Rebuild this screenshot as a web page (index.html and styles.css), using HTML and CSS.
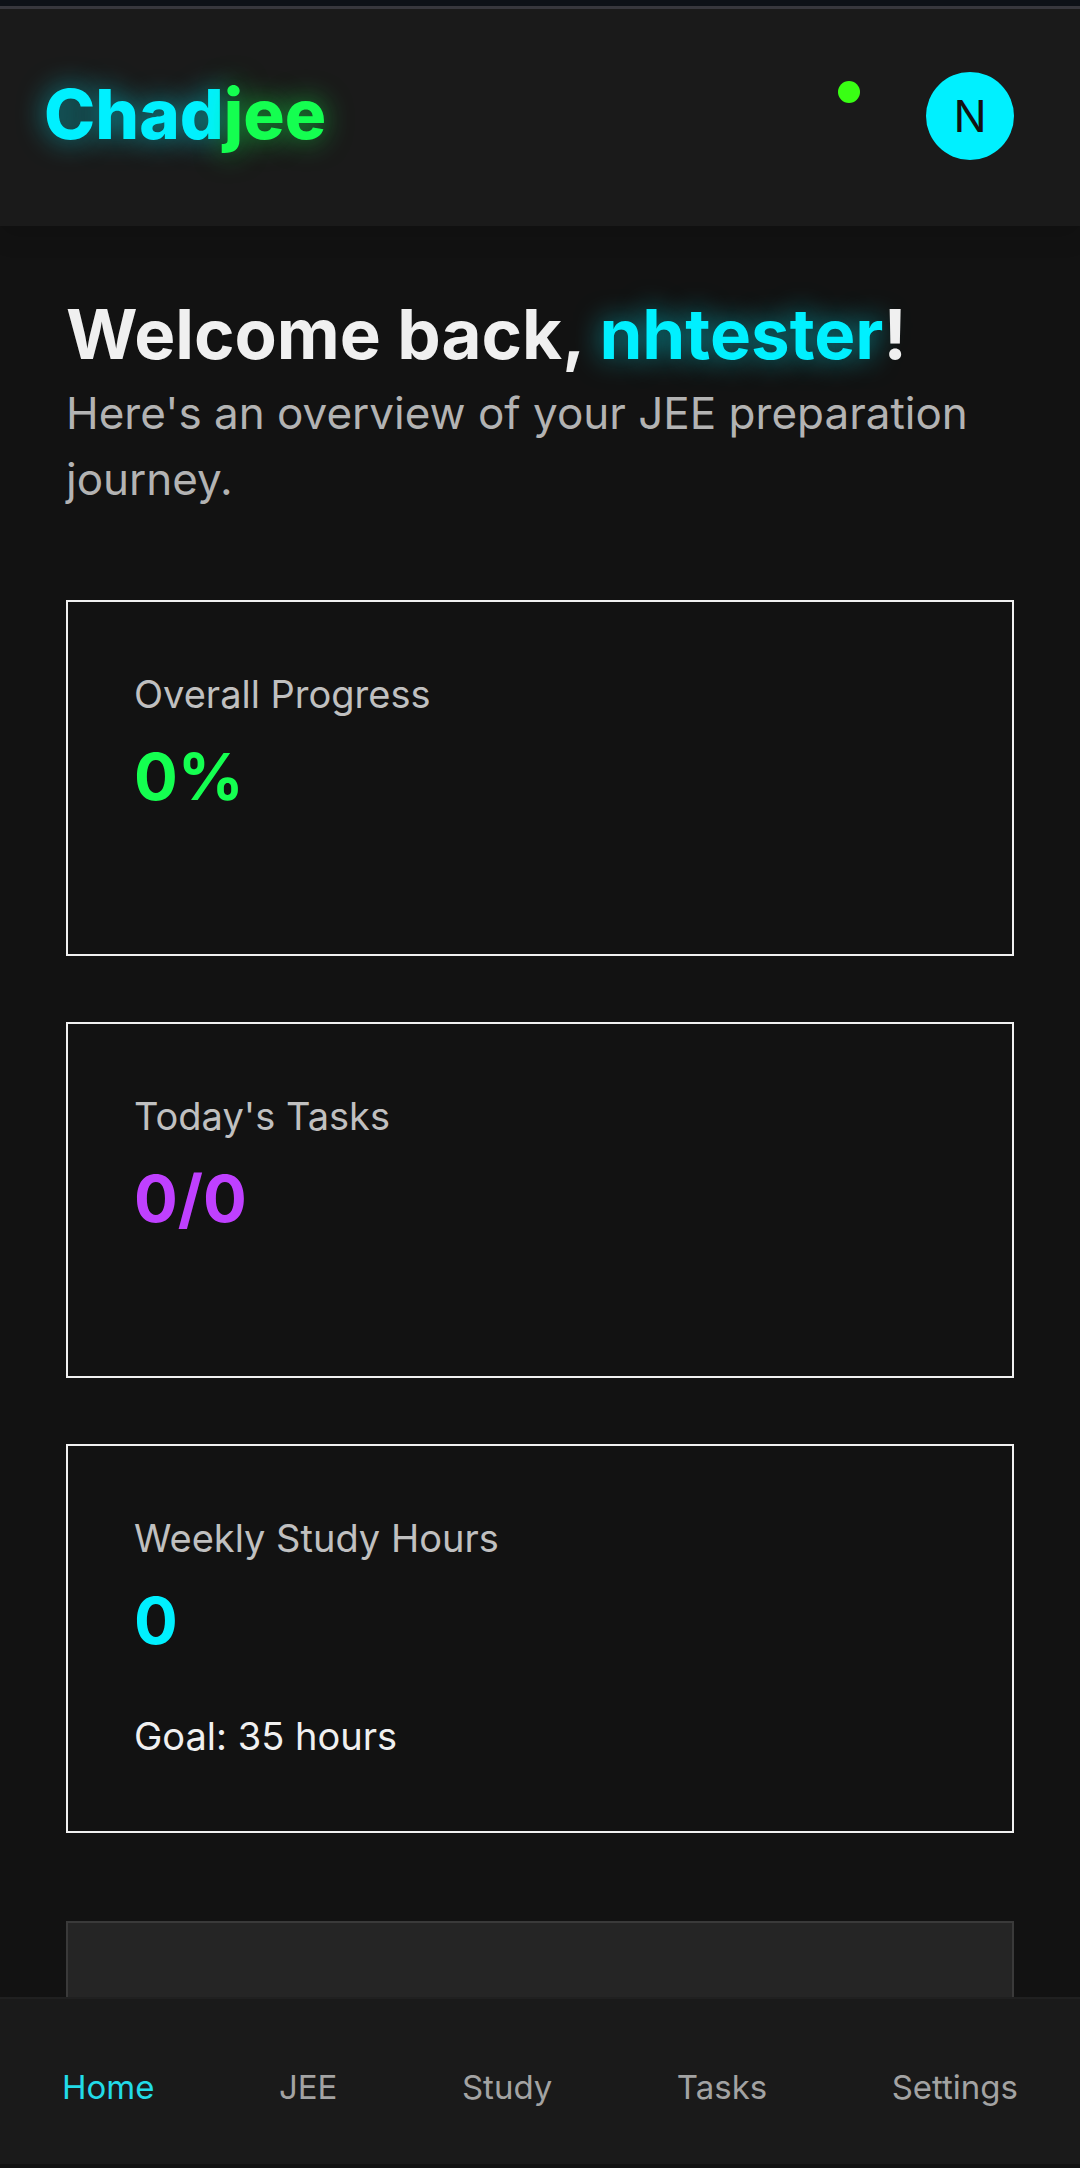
FILE: index.html
```html
<!DOCTYPE html>
<html lang="en">
<head>
<meta charset="utf-8">
<meta name="viewport" content="width=device-width, initial-scale=1">
<title>Chadjee</title>
<link rel="stylesheet" href="styles.css">
</head>
<body>
<header class="header">
  <a class="logo" href="#"><span class="logo-chad">Chad</span><span class="logo-jee">jee</span></a>
  <div class="actions">
    <button class="bell" type="button" aria-label="Notifications"><span class="dot"></span></button>
    <button class="avatar" type="button">N</button>
  </div>
</header>
<main class="main">
  <section class="welcome">
    <h1 class="title">Welcome back, <span class="user">nhtester</span>!</h1>
    <p class="subtitle">Here's an overview of your JEE preparation journey.</p>
  </section>
  <section class="stats">
    <article class="card">
      <h2 class="label">Overall Progress</h2>
      <p class="value green">0%</p>
      <div class="bar"></div>
    </article>
    <article class="card">
      <h2 class="label">Today's Tasks</h2>
      <p class="value purple">0/0</p>
      <div class="bar"></div>
    </article>
    <article class="card">
      <h2 class="label">Weekly Study Hours</h2>
      <p class="value cyan">0</p>
      <p class="goal">Goal: 35 hours</p>
    </article>
  </section>
  <section class="panel"></section>
</main>
<nav class="nav">
  <a class="nav-link active" href="#">Home</a>
  <a class="nav-link" href="#">JEE</a>
  <a class="nav-link" href="#">Study</a>
  <a class="nav-link" href="#">Tasks</a>
  <a class="nav-link" href="#">Settings</a>
</nav>
</body>
</html>
```
FILE: styles.css
```css
:root {
  --cyan: #00f0ff;
  --green: #14ff50;
  --purple: #bf40ff;
  --surface: #1a1a1a;
}

* {
  box-sizing: border-box;
  margin: 0;
}

body {
  height: 100vh;
  display: flex;
  flex-direction: column;
  overflow: hidden;
  padding-bottom: 4px;
  background: #121212;
  color: #f0f0f0;
  font-family: Inter, "Liberation Sans", sans-serif;
  border-top: 6px solid #0d1117;
}

a {
  text-decoration: none;
}

button {
  border: 0;
  padding: 0;
  font: inherit;
}

.header {
  flex: none;
  display: flex;
  align-items: center;
  justify-content: space-between;
  height: 220px;
  padding: 0 66px 4px 44px;
  background: var(--surface);
  border-top: 3px solid #37373d;
  box-shadow: 0 8px 24px rgba(0, 0, 0, 0.15);
}

.logo {
  padding-bottom: 4px;
  font-size: 69px;
  line-height: 88px;
  font-weight: 800;
}

.logo-chad {
  color: var(--cyan);
  text-shadow: 0 0 28px rgba(0, 240, 255, 0.6);
}

.logo-jee {
  color: var(--green);
  text-shadow: 0 0 28px rgba(20, 255, 80, 0.6);
}

.actions {
  display: flex;
  align-items: center;
  gap: 44px;
}

.bell {
  position: relative;
  width: 66px;
  height: 70px;
  background: none;
}

.dot {
  position: absolute;
  top: 0;
  right: 22px;
  width: 22px;
  height: 22px;
  border-radius: 50%;
  background: #39ff14;
}

.avatar {
  width: 88px;
  height: 88px;
  border-radius: 50%;
  background: var(--cyan);
  color: #121212;
  font-size: 44px;
}

.main {
  flex: 1;
  min-height: 0;
  overflow: hidden;
  padding: 66px 66px 0;
}

.title {
  margin-bottom: 4px;
  font-size: 69px;
  line-height: 84px;
  font-weight: 700;
}

.user {
  color: var(--cyan);
  text-shadow: 0 0 28px rgba(0, 240, 255, 0.6);
}

.subtitle {
  font-size: 44px;
  line-height: 66px;
  color: #b3b3b3;
}

.stats {
  display: grid;
  gap: 66px;
  margin: 88px 0;
}

.card {
  border: 2px solid #f0f0f0;
  padding: 65px 66px 67px;
}

.label {
  font-size: 38px;
  line-height: 55px;
  font-weight: 400;
  color: #c0c0c0;
}

.value {
  margin-top: 11px;
  font-size: 65px;
  line-height: 88px;
  font-weight: 700;
}

.green {
  color: var(--green);
}

.purple {
  color: var(--purple);
}

.cyan {
  color: var(--cyan);
}

.bar {
  height: 22px;
  margin-top: 44px;
}

.goal {
  margin-top: 44px;
  font-size: 38px;
  line-height: 55px;
}

.panel {
  height: 400px;
  background: #252525;
  border: 2px solid #3a3a3a;
}

.nav {
  flex: none;
  display: flex;
  align-items: center;
  justify-content: space-between;
  height: 167px;
  padding: 10px 62px 0;
  background: var(--surface);
  border-top: 2px solid #202020;
}

.nav-link {
  font-size: 33px;
  line-height: 44px;
  color: #a3a3a3;
}

.active {
  color: #22dbe8;
}
```
